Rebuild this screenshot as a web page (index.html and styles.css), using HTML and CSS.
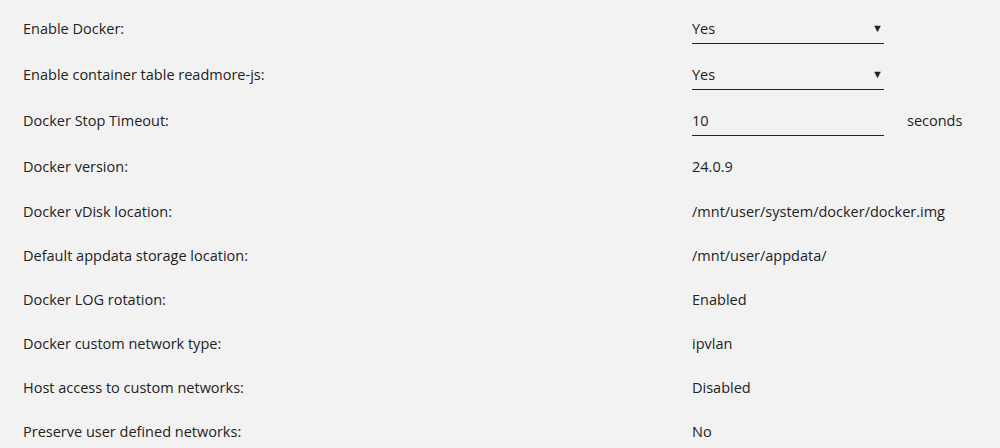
FILE: index.html
```html
<!DOCTYPE html>
<html lang="en">
<head>
  <meta charset="UTF-8">
  <meta name="viewport" content="width=device-width, initial-scale=1.0">
  <title>Docker Settings</title>
  <link rel="stylesheet" href="styles.css">
</head>
<body>
  <div class="settings">
    <!-- editable rows -->
    <div class="row tall">
      <div class="label">Enable Docker:</div>
      <div class="value">
        <div class="select"><span>Yes</span><span class="arrow">&#9660;</span></div>
      </div>
    </div>
    <div class="row tall">
      <div class="label">Enable container table readmore-js:</div>
      <div class="value">
        <div class="select"><span>Yes</span><span class="arrow">&#9660;</span></div>
      </div>
    </div>
    <div class="row tall">
      <div class="label">Docker Stop Timeout:</div>
      <div class="value">
        <div class="select"><span>10</span></div>
        <span class="unit">seconds</span>
      </div>
    </div>

    <!-- read-only rows -->
    <div class="row tall">
      <div class="label">Docker version:</div>
      <div class="value">24.0.9</div>
    </div>
    <div class="row">
      <div class="label">Docker vDisk location:</div>
      <div class="value">/mnt/user/system/docker/docker.img</div>
    </div>
    <div class="row">
      <div class="label">Default appdata storage location:</div>
      <div class="value">/mnt/user/appdata/</div>
    </div>
    <div class="row">
      <div class="label">Docker LOG rotation:</div>
      <div class="value">Enabled</div>
    </div>
    <div class="row">
      <div class="label">Docker custom network type:</div>
      <div class="value">ipvlan</div>
    </div>
    <div class="row">
      <div class="label">Host access to custom networks:</div>
      <div class="value">Disabled</div>
    </div>
    <div class="row">
      <div class="label">Preserve user defined networks:</div>
      <div class="value">No</div>
    </div>
  </div>
</body>
</html>
```

FILE: styles.css
```css
* {
  box-sizing: border-box;
}
body {
  margin: 0;
  padding: 5px 0 0 23px;
  background-color: #f2f2f2;
  color: #222;
  font-family: "Open Sans", "Noto Sans", sans-serif;
  font-size: 14.5px;
}

/* each setting row */
.row {
  display: flex;
  align-items: center;
  height: 44px;
}
.row.tall {
  height: 46px;
}
.label {
  width: 669px;
}
.value {
  display: flex;
  align-items: center;
}

/* select-like field with underline */
.select {
  width: 192px;
  height: 32px;
  display: flex;
  align-items: center;
  justify-content: space-between;
  padding-top: 2px;
  border-bottom: 1px solid #222;
}
.arrow {
  font-size: 11px;
  margin-right: 1px;
  padding-bottom: 2px;
}
.unit {
  margin-left: 23px;
}
```
